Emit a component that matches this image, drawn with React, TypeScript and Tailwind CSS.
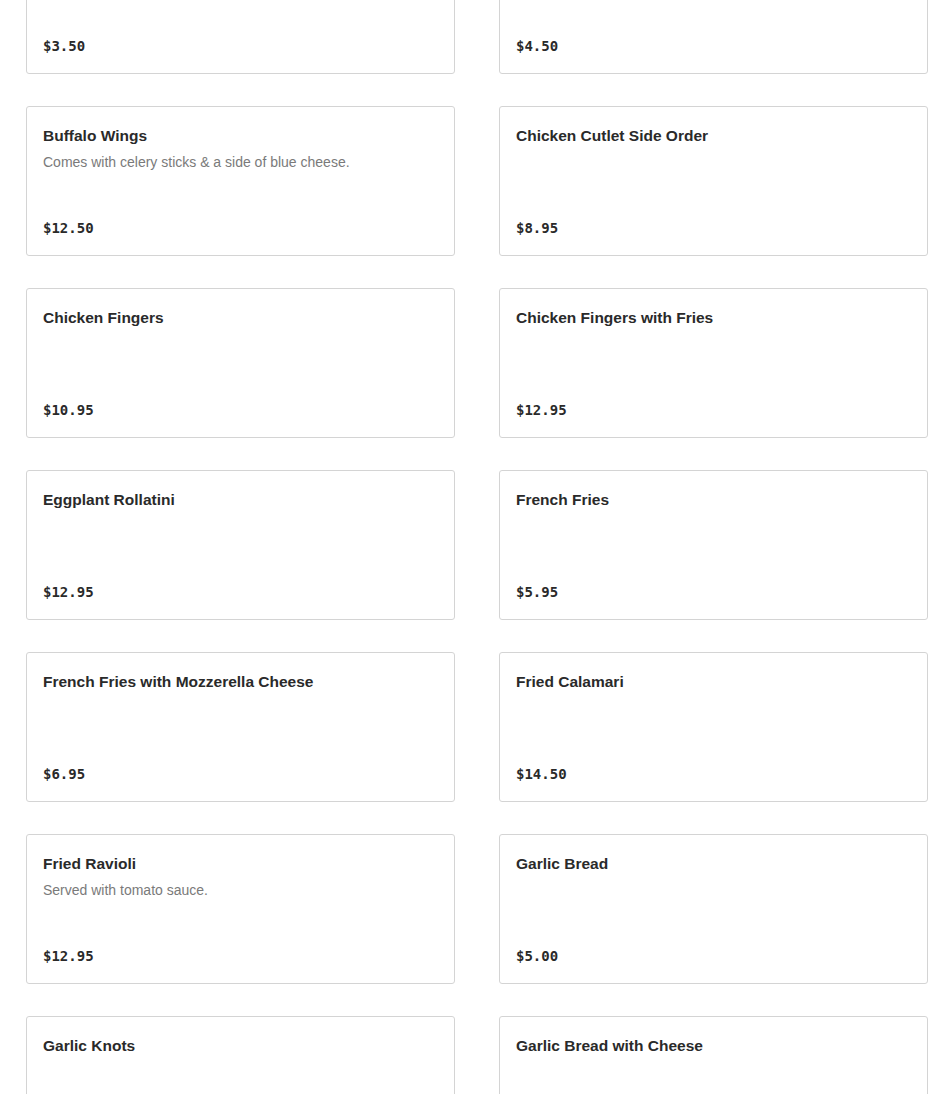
import React from 'react';

interface MenuItem {
  name?: string;
  description?: string;
  price: string;
}

const items: MenuItem[] = [
  { price: '$3.50' },
  { price: '$4.50' },
  { name: 'Buffalo Wings', description: 'Comes with celery sticks & a side of blue cheese.', price: '$12.50' },
  { name: 'Chicken Cutlet Side Order', price: '$8.95' },
  { name: 'Chicken Fingers', price: '$10.95' },
  { name: 'Chicken Fingers with Fries', price: '$12.95' },
  { name: 'Eggplant Rollatini', price: '$12.95' },
  { name: 'French Fries', price: '$5.95' },
  { name: 'French Fries with Mozzerella Cheese', price: '$6.95' },
  { name: 'Fried Calamari', price: '$14.50' },
  { name: 'Fried Ravioli', description: 'Served with tomato sauce.', price: '$12.95' },
  { name: 'Garlic Bread', price: '$5.00' },
  { name: 'Garlic Knots', price: '$6.95' },
  { name: 'Garlic Bread with Cheese', price: '$6.50' },
];

const ItemCard: React.FC<{ item: MenuItem }> = ({ item }) => (
  <div className="h-[150px] bg-white border border-[#d4d4d4] rounded-[3px] px-4 pt-[17px] pb-[17px] flex flex-col justify-between">
    <div>
      {item.name && (
        <h3 className="text-[15.5px] leading-6 font-semibold text-[#2a2a2a] font-['Liberation_Sans',sans-serif]">{item.name}</h3>
      )}
      {item.description && (
        <p className="mt-1 text-[14px] leading-5 text-[#7a7a7a] font-['Liberation_Sans',sans-serif]">{item.description}</p>
      )}
    </div>
    <span className="text-[14px] leading-5 font-bold text-[#2a2a2a] font-['DejaVu_Sans_Mono',monospace]">{item.price}</span>
  </div>
);

export default function App() {
  return (
    <div className="bg-white h-screen overflow-hidden">
      <div className="-mt-[76px] pl-[26px] pr-[22px] grid grid-cols-2 gap-x-[44px] gap-y-[32px]">
        {items.map((item, i) => (
          <ItemCard key={i} item={item} />
        ))}
      </div>
    </div>
  );
}
